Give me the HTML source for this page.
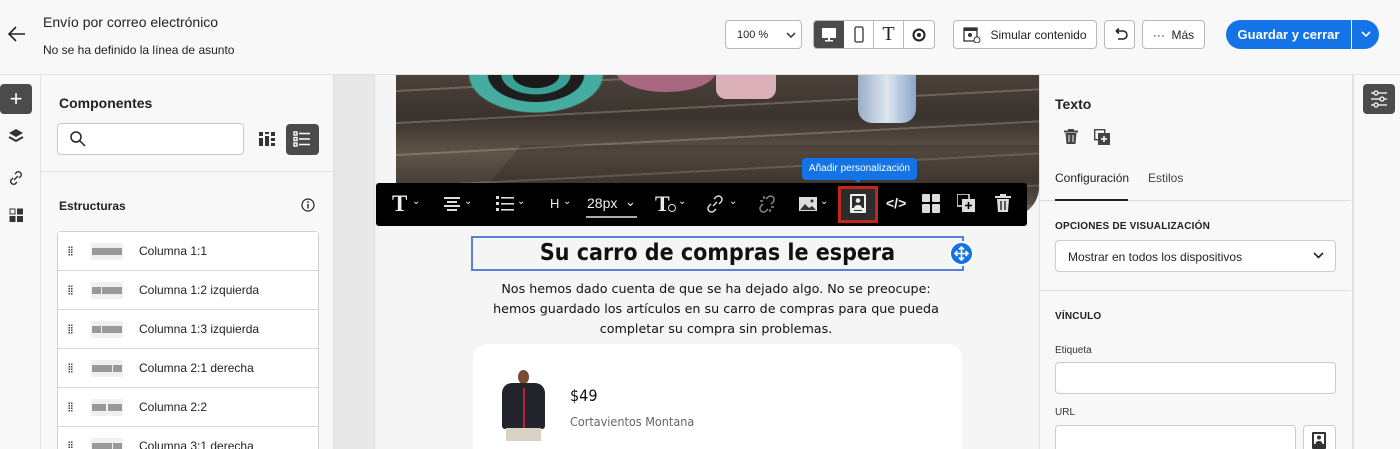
<!DOCTYPE html>
<html style="width:1400px;height:449px;overflow:hidden"><head><meta charset="utf-8">
<style>
*{box-sizing:border-box;margin:0;padding:0}
body{width:1400px;height:449px;overflow:hidden;background:#f8f8f8;font-family:"Liberation Sans",sans-serif;color:#222;position:relative}
.a{position:absolute}
.btn{position:absolute;border:1px solid #b8b8b8;border-radius:4px;background:#fff;font-size:12px;display:flex;align-items:center;justify-content:center;color:#222}
.row{position:absolute;left:58px;width:260px;height:39px;background:#fff;border-bottom:1px solid #d8d8d8;font-size:12px;display:flex;align-items:center}
.row .d{margin-left:10px;width:5px;height:10px;background:radial-gradient(circle,#444 0 0.8px,transparent 1px) 0 0/2.5px 2.5px}
.row .ic{margin-left:18px;width:32px;height:17px;background:#f0f0f0;position:relative}
.row .ic i{position:absolute;top:5px;height:7px;background:#999}
.row span{margin-left:16px}
.tb{position:absolute;color:#eee;font-size:14px}
.lbl{font-size:10px;font-weight:bold;color:#222;letter-spacing:.2px}
</style></head><body>
<div class="a" style="left:0;top:0;width:1400px;height:75px;background:#f8f8f8;border-bottom:1px solid #e1e1e1"></div>
<svg class="a" style="left:8px;top:26px" width="18" height="16" viewBox="0 0 18 16"><path d="M17 8H2M8 1L1 8l7 7" stroke="#222" stroke-width="1.6" fill="none"/></svg>
<div class="a" style="left:43px;top:14px;font-size:14px;color:#222">Envío por correo electrónico</div>
<div class="a" style="left:43px;top:43px;font-size:12px;color:#222">No se ha definido la línea de asunto</div>
<div class="btn" style="left:725px;top:20px;width:77px;height:29px;justify-content:flex-start;padding-left:11px;font-size:11px">100 %<svg style="margin-left:18px" width="10" height="6"><path d="M1 1l4 4 4-4" stroke="#333" stroke-width="1.5" fill="none"/></svg></div>
<div class="btn" style="left:813px;top:20px;width:122px;height:29px;overflow:hidden;justify-content:flex-start">
 <div style="width:30px;height:29px;background:#4b4b4b;display:flex;align-items:center;justify-content:center"><svg width="16" height="15"><rect x="1" y="1" width="14" height="10" fill="#fff"/><rect x="7" y="11" width="2" height="3" fill="#fff"/><rect x="4" y="13" width="8" height="1.5" fill="#fff"/></svg></div>
 <div style="width:30px;height:29px;border-right:1px solid #b8b8b8;display:flex;align-items:center;justify-content:center"><svg width="10" height="17"><rect x="1" y="1" width="8" height="15" rx="1.5" fill="none" stroke="#333" stroke-width="1.3"/></svg></div>
 <div style="width:30px;height:29px;border-right:1px solid #b8b8b8;display:flex;align-items:center;justify-content:center;font-family:'Liberation Serif';font-size:20px">T</div>
 <div style="width:30px;height:29px;display:flex;align-items:center;justify-content:center"><svg width="14" height="14"><circle cx="7" cy="7" r="5.5" fill="none" stroke="#222" stroke-width="2"/><circle cx="7" cy="7" r="2" fill="#222"/></svg></div>
</div>
<div class="btn" style="left:953px;top:20px;width:144px;height:29px"><svg width="18" height="16" style="margin-right:9px"><rect x="1" y="1" width="13" height="13" fill="none" stroke="#333" stroke-width="1.3"/><rect x="1" y="1" width="13" height="3" fill="#333"/><circle cx="7" cy="8" r="2" fill="#333"/><circle cx="14" cy="13" r="3" fill="#fff" stroke="#333"/></svg>Simular contenido</div>
<div class="btn" style="left:1104px;top:20px;width:31px;height:29px"><svg width="16" height="14"><path d="M4 3h7a4 4 0 010 8H6M4 3l3-2.5M4 3l3 2.5" stroke="#222" stroke-width="1.5" fill="none"/></svg></div>
<div class="btn" style="left:1142px;top:20px;width:63px;height:29px">··· &nbsp;Más</div>
<div class="a" style="left:1226px;top:20px;width:153px;height:29px;background:#1473e6;border-radius:15px;color:#fff;font-size:13px;font-weight:bold"><div class="a" style="left:0;top:7px;width:125px;text-align:center">Guardar y cerrar</div><div class="a" style="left:125px;top:0;width:1px;height:29px;background:#fff"></div><svg class="a" style="left:135px;top:11px" width="10" height="7"><path d="M1 1l4 4 4-4" stroke="#fff" stroke-width="1.6" fill="none"/></svg></div>

<div class="a" style="left:0;top:75px;width:41px;height:374px;border-right:1px solid #e1e1e1"></div>
<div class="a" style="left:0;top:84px;width:32px;height:30px;background:#4b4b4b;border-radius:4px;color:#fff;font-size:22px;text-align:center;line-height:30px">+</div>
<svg class="a" style="left:8px;top:128px" width="16" height="16"><path d="M8 1l7 4-7 4-7-4z" fill="#333"/><path d="M1 9l7 4 7-4" stroke="#333" stroke-width="2" fill="none"/></svg>
<svg class="a" style="left:8px;top:170px" width="16" height="16"><path d="M6 10l4-4M7 4l2-2a3 3 0 014 4l-2 2M9 12l-2 2a3 3 0 01-4-4l2-2" stroke="#333" stroke-width="1.4" fill="none"/></svg>
<svg class="a" style="left:9px;top:208px" width="15" height="15"><rect x="1" y="1" width="5" height="5" fill="none" stroke="#333"/><rect x="8" y="0.5" width="6" height="6" fill="#333"/><rect x="0.5" y="8" width="6" height="6" fill="#333"/><rect x="8" y="8" width="6" height="6" fill="#333"/></svg>

<div class="a" style="left:41px;top:75px;width:294px;height:374px;background:#f8f8f8;border-right:2px solid #e1e1e1"></div>
<div class="a" style="left:59px;top:95px;font-size:14px;font-weight:bold">Componentes</div>
<div class="a" style="left:57px;top:123px;width:187px;height:32px;background:#fff;border:1px solid #c8c8c8;border-radius:4px"></div>
<svg class="a" style="left:69px;top:130px" width="17" height="17"><circle cx="7" cy="7" r="5" fill="none" stroke="#222" stroke-width="1.5"/><path d="M11 11l5 5" stroke="#222" stroke-width="1.5"/></svg>
<svg class="a" style="left:259px;top:131px" width="16" height="16"><g fill="#333"><rect x="0" y="1" width="4" height="4"/><rect x="6" y="1" width="4" height="2"/><rect x="12" y="1" width="4" height="4"/><rect x="0" y="7" width="4" height="8"/><rect x="6" y="5" width="4" height="10"/><rect x="12" y="7" width="4" height="3"/><rect x="12" y="12" width="4" height="3"/></g></svg>
<div class="a" style="left:286px;top:124px;width:33px;height:31px;background:#4b4b4b;border-radius:4px"></div>
<svg class="a" style="left:293px;top:131px" width="18" height="16"><g fill="none" stroke="#fff" stroke-width="1.4"><rect x="1" y="1" width="3" height="3"/><rect x="1" y="6.5" width="3" height="3"/><rect x="1" y="12" width="3" height="3"/><path d="M6 2.5h11M6 8h11M6 13.5h11"/></g></svg>
<div class="a" style="left:41px;top:171px;width:292px;height:1px;background:#e1e1e1"></div>
<div class="a" style="left:59px;top:199px;font-size:12px;font-weight:bold">Estructuras</div>
<svg class="a" style="left:301px;top:198px" width="14" height="14"><circle cx="7" cy="7" r="6" fill="none" stroke="#222" stroke-width="1.2"/><rect x="6.3" y="6" width="1.4" height="4.5" fill="#222"/><circle cx="7" cy="4" r=".9" fill="#222"/></svg>
<div class="a" style="left:57px;top:231px;width:262px;height:230px;border:1px solid #d0d0d0;border-radius:4px;background:#fff"></div>
<div class="row" style="top:232px"><div class="d"></div><div class="ic"><i style="left:1px;width:30px"></i></div><span>Columna 1:1</span></div>
<div class="row" style="top:271px"><div class="d"></div><div class="ic"><i style="left:1px;width:9px"></i><i style="left:11px;width:20px"></i></div><span>Columna 1:2 izquierda</span></div>
<div class="row" style="top:310px"><div class="d"></div><div class="ic"><i style="left:1px;width:9px"></i><i style="left:11px;width:20px"></i></div><span>Columna 1:3 izquierda</span></div>
<div class="row" style="top:349px"><div class="d"></div><div class="ic"><i style="left:1px;width:20px"></i><i style="left:22px;width:9px"></i></div><span>Columna 2:1 derecha</span></div>
<div class="row" style="top:388px"><div class="d"></div><div class="ic"><i style="left:1px;width:14px"></i><i style="left:17px;width:14px"></i></div><span>Columna 2:2</span></div>
<div class="row" style="top:427px"><div class="d"></div><div class="ic"><i style="left:1px;width:20px"></i><i style="left:22px;width:9px"></i></div><span>Columna 3:1 derecha</span></div>

<div class="a" style="left:335px;top:75px;width:40px;height:374px;background:#e8e8e8;border-right:1px solid #ddd"></div>
<div class="a" style="left:375px;top:75px;width:664px;height:374px;background:#f5f5f5"></div>
<div class="a" style="left:396px;top:75px;width:643px;height:142px;border-bottom-right-radius:30px;overflow:hidden;background:linear-gradient(180deg,#4a423a 0%,#3a322c 30%,#5e5449 55%,#4a4038 75%,#7a6f62 100%)">
 <div class="a" style="left:0;top:0;width:643px;height:142px;background:repeating-linear-gradient(177deg,transparent 0 15px,rgba(200,190,175,.3) 15px 17px,transparent 17px 32px)"></div>
 <div class="a" style="left:60px;top:-45px;width:160px;height:90px;border-radius:50%;background:radial-gradient(ellipse,#1a1a1a 0 20%,#3a9f96 21% 30%,#1e1e1e 31% 42%,#45aca0 43% 58%,transparent 60%)"></div>
 <div class="a" style="left:220px;top:-25px;width:100px;height:42px;border-radius:50%;background:#a86882"></div>
 <div class="a" style="left:320px;top:-10px;width:60px;height:34px;border-radius:0 0 10px 10px;background:#dcb0b8"></div>
 <div class="a" style="left:462px;top:-10px;width:58px;height:58px;border-radius:0 0 14px 14px;background:linear-gradient(90deg,#9aaec6,#dde6f0,#8aa6c8)"></div>
 <div class="a" style="left:100px;top:70px;width:643px;height:60px;background:rgba(20,15,10,.2);transform:skewX(-40deg)"></div>
</div>
<div class="a" style="left:802px;top:158px;width:115px;height:22px;background:#1473e6;border-radius:4px;color:#fff;font-size:10px;text-align:center;line-height:22px">Añadir personalización</div>
<div class="a" style="left:854px;top:179px;width:0;height:0;border-left:4px solid transparent;border-right:4px solid transparent;border-top:4px solid #1473e6"></div>
<div class="a" style="left:376px;top:183px;width:651px;height:43px;background:#000;border-radius:3px"></div>
<div class="tb" style="left:392px;top:191px;font-family:'Liberation Serif';font-size:23px;font-weight:bold">T</div><div class="tb" style="left:412px;top:196px;font-size:10px">⌄</div>
<svg class="a" style="left:443px;top:196px" width="18" height="16"><path d="M1 2h16M4 6h10M1 10h16M4 14h10" stroke="#ddd" stroke-width="2"/></svg><div class="tb" style="left:464px;top:196px;font-size:10px">⌄</div>
<svg class="a" style="left:496px;top:195px" width="18" height="17"><g fill="#ddd"><rect x="0" y="1" width="3" height="3"/><rect x="0" y="7" width="3" height="3"/><rect x="0" y="13" width="3" height="3"/><rect x="5" y="2" width="13" height="1.6"/><rect x="5" y="8" width="13" height="1.6"/><rect x="5" y="14" width="13" height="1.6"/></g></svg><div class="tb" style="left:517px;top:196px;font-size:10px">⌄</div>
<div class="tb" style="left:550px;top:196px;font-size:13px">H</div><div class="tb" style="left:563px;top:196px;font-size:10px">⌄</div>
<div class="tb" style="left:587px;top:195px;font-size:14px">28px</div><div class="tb" style="left:625px;top:194px;font-size:13px">⌄</div>
<div class="a" style="left:586px;top:216px;width:51px;height:2px;background:#aaa"></div>
<div class="tb" style="left:655px;top:191px;font-family:'Liberation Serif';font-size:22px;font-weight:bold">T</div><div class="a" style="left:668px;top:204px;width:8px;height:8px;border-radius:50%;border:1.5px solid #ddd"></div><div class="tb" style="left:678px;top:196px;font-size:10px">⌄</div>
<svg class="a" style="left:706px;top:195px" width="18" height="18"><path d="M7 11l4-4M8 4l2-2a3.5 3.5 0 015 5l-2 2M10 14l-2 2a3.5 3.5 0 01-5-5l2-2" stroke="#ddd" stroke-width="1.5" fill="none"/></svg><div class="tb" style="left:729px;top:196px;font-size:10px">⌄</div>
<svg class="a" style="left:758px;top:195px" width="18" height="18"><path d="M8 4l2-2a3.5 3.5 0 015 5l-2 2M10 14l-2 2a3.5 3.5 0 01-5-5l2-2M2 6h3M6 1v3M16 12h-3M12 17v-3" stroke="#888" stroke-width="1.5" fill="none"/></svg>
<svg class="a" style="left:799px;top:197px" width="18" height="14"><rect x="0" y="0" width="18" height="14" fill="#ddd"/><path d="M1 13l5-6 4 4 3-2 4 4z" fill="#333"/><circle cx="13" cy="4" r="1.5" fill="#333"/></svg><div class="tb" style="left:820px;top:196px;font-size:10px">⌄</div>
<div class="a" style="left:838px;top:186px;width:40px;height:37px;border:3px solid #c1271d;background:#2d2d2d"></div>
<svg class="a" style="left:850px;top:194px" width="16" height="19"><rect x="0" y="0" width="16" height="19" rx="1" fill="#eee"/><rect x="2" y="2" width="12" height="12" fill="#2d2d2d"/><circle cx="8" cy="6.5" r="2.3" fill="#eee"/><path d="M4 14c0-4 8-4 8 0z" fill="#eee"/><rect x="4" y="16" width="8" height="1" fill="#2d2d2d"/></svg>
<div class="tb" style="left:886px;top:195px;font-size:14px;font-weight:bold">&lt;/&gt;</div>
<svg class="a" style="left:922px;top:194px" width="18" height="19"><g fill="#ddd"><rect x="0" y="0" width="8" height="8" rx="1"/><rect x="10" y="0" width="8" height="8" rx="1"/><rect x="0" y="10" width="8" height="9" rx="1"/><rect x="10" y="10" width="8" height="9" rx="1"/></g></svg>
<svg class="a" style="left:957px;top:194px" width="19" height="19"><rect x="0" y="0" width="12" height="12" fill="none" stroke="#ddd" stroke-width="1.6"/><rect x="5" y="5" width="13" height="13" fill="#ddd"/><path d="M11.5 8v7M8 11.5h7" stroke="#000" stroke-width="1.6"/></svg>
<svg class="a" style="left:995px;top:194px" width="16" height="19"><rect x="0" y="2" width="16" height="2" fill="#ddd"/><rect x="5" y="0" width="6" height="2" fill="#ddd"/><path d="M2 5h12l-1 13H3z" fill="#ddd"/><path d="M6 7v9M10 7v9" stroke="#000" stroke-width="1.2"/></svg>
<div class="a" style="left:471px;top:236px;width:493px;height:35px;border:2px solid #5681d8"></div>
<div class="a" style="left:471px;top:240px;width:493px;text-align:center;font-family:'DejaVu Sans Condensed','DejaVu Sans',sans-serif;font-stretch:condensed;font-size:23px;font-weight:bold;color:#111">Su carro de compras le espera</div>
<div class="a" style="left:949px;top:241px;width:25px;height:25px;border-radius:50%;background:#1473e6;border:2px solid #fff"></div>
<svg class="a" style="left:953px;top:245px" width="17" height="17"><path d="M8.5 2v13M2 8.5h13M6 4.5l2.5-2.5 2.5 2.5M6 12.5l2.5 2.5 2.5-2.5M4.5 6L2 8.5 4.5 11M12.5 6L15 8.5 12.5 11" stroke="#fff" stroke-width="1.6" fill="none"/></svg>
<div class="a" style="left:451px;top:279px;width:530px;text-align:center;font-family:'DejaVu Sans',sans-serif;font-size:12.7px;line-height:20px;color:#111">Nos hemos dado cuenta de que se ha dejado algo. No se preocupe:<br>hemos guardado los artículos en su carro de compras para que pueda<br>completar su compra sin problemas.</div>
<div class="a" style="left:473px;top:344px;width:489px;height:120px;background:#fff;border-radius:14px"></div>
<div class="a" style="left:518px;top:370px;width:11px;height:14px;border-radius:50%;background:#7a4a32"></div>
<div class="a" style="left:502px;top:383px;width:43px;height:46px;border-radius:10px 10px 3px 3px;background:#22252b"></div>
<div class="a" style="left:523px;top:388px;width:2px;height:40px;background:#b23"></div>
<div class="a" style="left:506px;top:428px;width:35px;height:13px;background:#d8d2c4"></div>
<div class="a" style="left:570px;top:386px;font-family:'DejaVu Sans Condensed','DejaVu Sans',sans-serif;font-size:16px;color:#111">$49</div>
<div class="a" style="left:570px;top:414px;font-family:'DejaVu Sans Condensed','DejaVu Sans',sans-serif;font-stretch:condensed;font-size:12.5px;color:#666">Cortavientos Montana</div>

<div class="a" style="left:1039px;top:75px;width:315px;height:374px;background:#f8f8f8;border-left:1px solid #e1e1e1;border-right:2px solid #e1e1e1"></div>
<div class="a" style="left:1055px;top:96px;font-size:14px;font-weight:bold">Texto</div>
<svg class="a" style="left:1064px;top:129px" width="14" height="16"><rect x="0" y="1.5" width="14" height="2" fill="#444"/><rect x="4" y="0" width="6" height="2" fill="#444"/><path d="M1.5 4h11l-1 11h-9z" fill="#444"/><path d="M5 6v7M9 6v7" stroke="#f8f8f8" stroke-width="1"/></svg>
<svg class="a" style="left:1094px;top:129px" width="16" height="16"><rect x="0.7" y="0.7" width="10" height="10" fill="none" stroke="#444" stroke-width="1.4"/><rect x="4" y="4" width="12" height="12" fill="#444"/><path d="M10 7v6M7 10h6" stroke="#fff" stroke-width="1.5"/></svg>
<div class="a" style="left:1055px;top:171px;font-size:12px">Configuración</div>
<div class="a" style="left:1148px;top:171px;font-size:12px;color:#444">Estilos</div>
<div class="a" style="left:1040px;top:200px;width:311px;height:1px;background:#ddd"></div>
<div class="a" style="left:1055px;top:199px;width:73px;height:2px;background:#222"></div>
<div class="a lbl" style="left:1055px;top:221px">OPCIONES DE VISUALIZACIÓN</div>
<div class="a" style="left:1055px;top:240px;width:281px;height:32px;background:#fff;border:1px solid #ccc;border-radius:4px;font-size:12px;padding:9px 12px">Mostrar en todos los dispositivos</div>
<svg class="a" style="left:1313px;top:252px" width="11" height="7"><path d="M1 1l4.5 4.5L10 1" stroke="#222" stroke-width="1.6" fill="none"/></svg>
<div class="a" style="left:1040px;top:290px;width:311px;height:1px;background:#ddd"></div>
<div class="a lbl" style="left:1055px;top:311px">VÍNCULO</div>
<div class="a" style="left:1055px;top:345px;font-size:10px;color:#333">Etiqueta</div>
<div class="a" style="left:1055px;top:362px;width:281px;height:32px;background:#fff;border:1px solid #ccc;border-radius:4px"></div>
<div class="a" style="left:1055px;top:407px;font-size:10px;color:#333">URL</div>
<div class="a" style="left:1055px;top:425px;width:241px;height:32px;background:#fff;border:1px solid #ccc;border-radius:4px"></div>
<div class="a" style="left:1303px;top:425px;width:33px;height:32px;background:#fff;border:1px solid #ccc;border-radius:4px"></div>
<svg class="a" style="left:1312px;top:432px" width="14" height="17"><rect x="0" y="0" width="14" height="17" rx="1" fill="#333"/><rect x="2" y="2" width="10" height="10" fill="#fff"/><circle cx="7" cy="5.5" r="2" fill="#333"/><path d="M3.5 12c0-4 7-4 7 0z" fill="#333"/></svg>
<div class="a" style="left:1363px;top:84px;width:32px;height:30px;background:#4b4b4b;border-radius:4px"></div>
<svg class="a" style="left:1370px;top:90px" width="18" height="18"><g stroke="#fff" stroke-width="1.3" fill="none"><path d="M1 3h16M1 9h16M1 15h16"/><circle cx="6" cy="3" r="2" fill="#4b4b4b"/><circle cx="12" cy="9" r="2" fill="#4b4b4b"/><circle cx="6" cy="15" r="2" fill="#4b4b4b"/></g></svg>
</body></html>
